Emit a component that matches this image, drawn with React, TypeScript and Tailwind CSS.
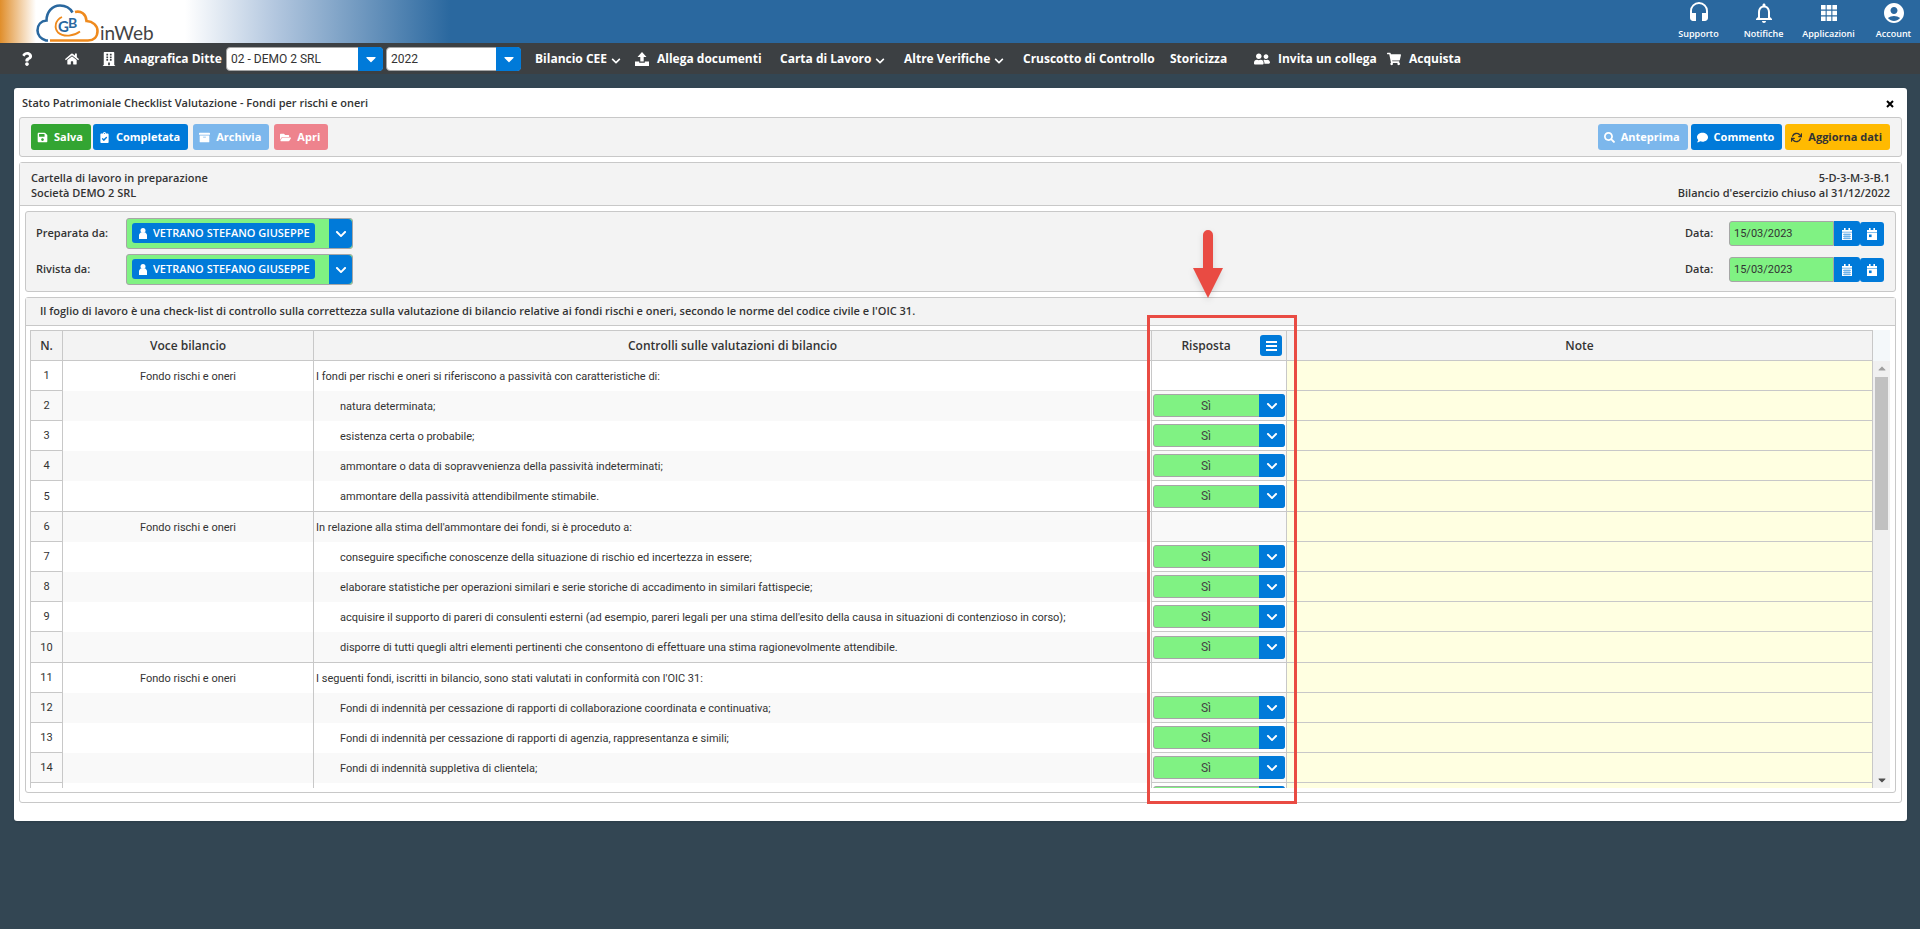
import { useState } from "react";
import type { ReactNode } from "react";
import {
  FaArchive,
  FaBuilding,
  FaCaretDown,
  FaChevronDown,
  FaClipboardCheck,
  FaComment,
  FaFolderOpen,
  FaHome,
  FaQuestion,
  FaSave,
  FaSearch,
  FaShoppingCart,
  FaUserFriends,
} from "react-icons/fa";
import { FiRefreshCw } from "react-icons/fi";
import { MdAccountCircle, MdHeadset, MdNotificationsNone } from "react-icons/md";

type Row = { voce?: string; text: string; answer: boolean };

const VOCE = "Fondo rischi e oneri";

const ROWS: Row[] = [
  { voce: VOCE, text: "I fondi per rischi e oneri si riferiscono a passività con caratteristiche di:", answer: false },
  { text: "natura determinata;", answer: true },
  { text: "esistenza certa o probabile;", answer: true },
  { text: "ammontare o data di sopravvenienza della passività indeterminati;", answer: true },
  { text: "ammontare della passività attendibilmente stimabile.", answer: true },
  { voce: VOCE, text: "In relazione alla stima dell'ammontare dei fondi, si è proceduto a:", answer: false },
  { text: "conseguire specifiche conoscenze della situazione di rischio ed incertezza in essere;", answer: true },
  { text: "elaborare statistiche per operazioni similari e serie storiche di accadimento in similari fattispecie;", answer: true },
  { text: "acquisire il supporto di pareri di consulenti esterni (ad esempio, pareri legali per una stima dell'esito della causa in situazioni di contenzioso in corso);", answer: true },
  { text: "disporre di tutti quegli altri elementi pertinenti che consentono di effettuare una stima ragionevolmente attendibile.", answer: true },
  { voce: VOCE, text: "I seguenti fondi, iscritti in bilancio, sono stati valutati in conformità con l'OIC 31:", answer: false },
  { text: "Fondi di indennità per cessazione di rapporti di collaborazione coordinata e continuativa;", answer: true },
  { text: "Fondi di indennità per cessazione di rapporti di agenzia, rappresentanza e simili;", answer: true },
  { text: "Fondi di indennità suppletiva di clientela;", answer: true },
  { text: "", answer: true },
];

/* ── Icons ─────────────────────────────── */
function UserIcon() {
  return (
    <svg viewBox="0 0 8 11" className="w-2 h-[11px] shrink-0" fill="currentColor">
      <circle cx="4" cy="2.6" r="2.5" />
      <path d="M1.6 4.6h4.8L8 6.4V11H0V6.4z" />
    </svg>
  );
}

function UploadIcon() {
  return (
    <svg viewBox="0 0 14 14" className="w-3.5 h-3.5" fill="currentColor">
      <path d="M7 0l4.500 5H8.700v4.500H5.300V5H2.500z" />
      <path d="M0 9.500h4.200v1.300h5.600V9.500H14V14H0z" />
    </svg>
  );
}

function CalendarIcon() {
  return (
    <svg viewBox="0 0 10 12" className="w-2.5 h-3" fill="none">
      <path d="M0 2h10v10H0z" fill="#fff" />
      <path d="M2 0h1.6v3H2zM6.4 0H8v3H6.4z" fill="#fff" />
      <path d="M0 4.2h10M1 6.4h8M1 8.4h8M1 10.4h8M3 5.4v6M5 5.4v6M7 5.4v6" stroke="#3d99e3" strokeWidth="0.7" />
    </svg>
  );
}

function TodayIcon() {
  return (
    <svg viewBox="0 0 10 12" className="w-2.5 h-3">
      <path d="M0 2h10v2H0zM0 4.500h10V12H0zM2 0h1.6v3H2zM6.4 0H8v3H6.4z" fill="#fff" />
      <path d="M2 6.5h2.6v2.6H2z" fill="#007ad9" />
    </svg>
  );
}

function MenuIcon() {
  return (
    <svg viewBox="0 0 11 10" className="w-[11px] h-2.5" fill="#fff">
      <path d="M0 0h11v2H0zM0 4h11v2H0zM0 8h11v2H0z" />
    </svg>
  );
}

function GridIcon() {
  return (
    <svg viewBox="0 0 16 16" className="w-4 h-4" fill="currentColor">
      <path d="M0 0h4.6v4.6H0zM5.7 0h4.6v4.6H5.7zM11.4 0H16v4.6h-4.6zM0 5.7h4.6v4.6H0zM5.7 5.7h4.6v4.6H5.7zM11.4 5.7H16v4.6h-4.6zM0 11.4h4.6V16H0zM5.7 11.4h4.6V16H5.7zM11.4 11.4H16V16h-4.6z" />
    </svg>
  );
}

function Logo() {
  return (
    <svg viewBox="0 0 64 40" className="w-16 h-10" fill="none">
      <path d="M12 36.5H10C5 35 1.500 31 1.500 26.500C1.500 21 5 17 10.500 16.500C10.500 8 16 1.500 24 1.500C30 1.500 34 4 36.500 8.500" stroke="#2a689f" strokeWidth="2.600" />
      <path d="M39 8C45 6.500 50 10 50.500 17C57 17.500 61.500 21.500 61.500 27C61.500 33 57.500 36.500 52 36.500H14" stroke="#ef8a1d" strokeWidth="2.600" />
      <path d="M26 13C19 16 18 24 22 28.500C28 33.500 38 32 44 27.500" stroke="#ef8a1d" strokeWidth="1.800" />
      <text x="22" y="28" fontFamily="Lato, sans-serif" fontWeight="700" fontSize="15" fill="#2a689f">G</text>
      <text x="32" y="24" fontFamily="Lato, sans-serif" fontWeight="700" fontSize="14" fill="#2a689f">B</text>
    </svg>
  );
}

/* ── Small pieces ──────────────────────── */
function TopLink({ icon, label }: { icon: ReactNode; label: string }) {
  return (
    <a href="#" className="w-[65px] flex flex-col items-center text-white">
      <span className="h-[22px] flex items-center text-2xl">{icon}</span>
      <span className="mt-1 text-[9px] leading-3 font-semibold">{label}</span>
    </a>
  );
}

function NavLink({ icon, label, menu, className = "" }: { icon?: ReactNode; label: string; menu?: boolean; className?: string }) {
  return (
    <a href="#" className={`flex shrink-0 items-center whitespace-nowrap ${className}`}>
      {icon && <span className="mr-2 text-base">{icon}</span>}
      {label}
      {menu && <FaChevronDown className="ml-1 mt-1 text-[10px]" />}
    </a>
  );
}

function NavSelect({ label, value, className }: { label: string; value: string; className: string }) {
  return (
    <div className={`relative flex h-6 shrink-0 ${className}`}>
      <select
        aria-label={label}
        className="w-full appearance-none rounded-sm border border-[#a6a6a6] bg-white pl-1 pr-6 font-['Roboto',sans-serif] text-xs font-normal text-[#333] outline-none"
      >
        <option>{value}</option>
      </select>
      <span className="pointer-events-none absolute inset-y-0 right-0 flex w-[25px] items-center justify-center rounded-r-sm bg-[#007ad9] text-white">
        <FaCaretDown className="text-base" />
      </span>
    </div>
  );
}

function ToolButton({ icon, label, className }: { icon: ReactNode; label: string; className: string }) {
  return (
    <button type="button" className={`flex h-[26px] items-center gap-1.5 rounded-[3px] pl-1.5 pr-2 font-bold ${className}`}>
      {icon}
      {label}
    </button>
  );
}

function PersonField({ id, label }: { id: string; label: string }) {
  return (
    <div className="flex items-center">
      <label htmlFor={id} className="w-[90px] font-semibold">
        {label}
      </label>
      <div className="flex h-[31px] w-[227px] items-stretch justify-between rounded-[3px] border border-[#a6a6a6] bg-[#80f283]">
        <div className="m-1 ml-[5px] flex h-5 w-[183px] items-center gap-1.5 rounded-[3px] bg-[#007ad9] pl-[7px] text-white">
          <UserIcon />
          <select id={id} className="w-full appearance-none bg-transparent font-semibold outline-none">
            <option>VETRANO STEFANO GIUSEPPE</option>
          </select>
        </div>
        <button type="button" aria-label={`Apri elenco ${label}`} className="flex w-[23px] items-center justify-center rounded-r-sm bg-[#007ad9] text-white">
          <FaChevronDown className="text-xs" />
        </button>
      </div>
    </div>
  );
}

function DateField({ id }: { id: string }) {
  const [value, setValue] = useState("15/03/2023");

  return (
    <div className="flex h-[31px] items-center">
      <label htmlFor={id} className="w-11 font-semibold">
        Data:
      </label>
      <input
        id={id}
        type="text"
        value={value}
        onChange={(e) => setValue(e.target.value)}
        className="h-[25px] w-[105px] rounded-l-[3px] border border-[#a6a6a6] bg-[#80f283] px-1 font-['Roboto',sans-serif] text-[#333] outline-none"
      />
      <button type="button" aria-label="Calendario" className="flex h-[25px] w-[26px] items-center justify-center rounded-r-[3px] bg-[#007ad9]">
        <CalendarIcon />
      </button>
      <button type="button" aria-label="Oggi" className="flex h-6 w-6 items-center justify-center rounded-[3px] bg-[#007ad9]">
        <TodayIcon />
      </button>
    </div>
  );
}

function AnswerSelect({ row }: { row: number }) {
  return (
    <div className="relative mx-px h-[23px]">
      <select
        aria-label={`Risposta ${row}`}
        className="block h-full w-full appearance-none rounded-[3px] border border-[#a6a6a6] bg-[#80f283] pr-[26px] text-center [text-align-last:center] text-xs text-[#444] outline-none"
      >
        <option>Sì</option>
        <option>No</option>
      </select>
      <span className="pointer-events-none absolute inset-y-0 right-0 flex w-[26px] items-center justify-center rounded-r-[3px] bg-[#007ad9] text-white">
        <FaChevronDown className="text-xs" />
      </span>
    </div>
  );
}

function Columns() {
  return (
    <colgroup>
      <col className="w-8" />
      <col className="w-[251px]" />
      <col />
      <col className="w-[135px]" />
      <col className="w-[586px]" />
    </colgroup>
  );
}

/* Highlight frame and arrow over the answers column */
function Highlight() {
  return (
    <>
      <div className="pointer-events-none absolute -left-[5px] -top-4 z-10 h-[489px] w-[150px] border-3 border-[#e94b43]" />
      <svg viewBox="0 0 40 76" className="pointer-events-none absolute -top-[103px] left-9 z-10 h-[76px] w-10 drop-shadow-md">
        <path d="M15 7a5 5 0 0 1 10 0v33h10L20 70 5 40h10z" fill="#e94b43" />
      </svg>
    </>
  );
}

function Checklist() {
  return (
    <div className="p-1 pr-[5px]">
      <div className="flex">
        <table className="w-full flex-1 table-fixed border-collapse text-xs">
          <Columns />
          <thead>
            <tr className="h-[30px] bg-[#f3f3f3] [&>th]:border [&>th]:border-[#c8c8c8] [&>th]:p-0 [&>th]:font-semibold">
              <th>N.</th>
              <th>Voce bilancio</th>
              <th>Controlli sulle valutazioni di bilancio</th>
              <th className="relative">
                <div className="flex items-center">
                  <span className="flex-1">Risposta</span>
                  <button type="button" aria-label="Menu risposte" className="mr-1 flex h-[21px] w-[22px] items-center justify-center rounded-[3px] bg-[#007ad9]">
                    <MenuIcon />
                  </button>
                </div>
                <Highlight />
              </th>
              <th>Note</th>
            </tr>
          </thead>
        </table>
        <div className="w-[17px] bg-[#f4f8fa]" />
      </div>

      <div className="flex h-[427px]">
        <div className="flex-1 overflow-y-auto [scrollbar-width:none]">
          <table className="w-full table-fixed border-separate border-spacing-0 border-l border-[#c8c8c8] font-['Roboto',sans-serif]">
            <Columns />
            <tbody>
              {ROWS.map((row, i) => {
                // a group closes on the row before the next heading
                const last = Boolean(ROWS[i + 1]?.voce);
                const line = last ? "border-b" : "";
                return (
                  <tr
                    key={i}
                    className={`[&>td]:border-r [&>td]:border-[#c8c8c8] [&>td]:px-0 [&>td]:pb-0 ${last ? "h-[31px]" : "h-[30px]"} ${i % 2 ? "bg-[#f9f9f9]" : "bg-white"}`}
                  >
                    <td className="border-b pt-0.5 text-center">{row.text && i + 1}</td>
                    <td className={`pt-0.5 text-center ${line}`}>{row.voce}</td>
                    <td className={`pt-0.5 whitespace-nowrap ${line}`}>
                      <div className={row.voce ? "pl-0.5" : "pl-[26px]"}>{row.text}</div>
                    </td>
                    <td className="border-b pt-0">{row.answer && <AnswerSelect row={i + 1} />}</td>
                    <td className="border-b bg-[#ffffe1]" />
                  </tr>
                );
              })}
            </tbody>
          </table>
        </div>
        <div className="flex w-[17px] flex-col items-center bg-[#f0f0f0]">
          <FaCaretDown className="my-0.5 rotate-180 text-xs text-[#a0a0a0]" />
          <div className="h-[153px] w-[13px] bg-[#c1c1c1]" />
          <FaCaretDown className="mb-0.5 mt-auto text-xs text-[#505050]" />
        </div>
      </div>
    </div>
  );
}

export default function App() {
  return (
    <div className="min-h-screen bg-[#334653] font-['Open_Sans','Noto_Sans',sans-serif] text-[11px] text-[#333]">
      {/* ── Brand bar ── */}
      <header className="flex h-[43px] items-start justify-between bg-[linear-gradient(90deg,#e08e2b_0px,#fff_36px,#fff_185px,#b3c7df_275px,#2a689f_450px)] pt-0.5">
        <a href="#" className="flex items-end pl-9 pt-0.5">
          <Logo />
          <span className="pb-px font-['Lato',sans-serif] text-[19px] leading-5 text-[#444]">inWeb</span>
        </a>
        <div className="-mr-1.5 flex">
          <TopLink icon={<MdHeadset />} label="Supporto" />
          <TopLink icon={<MdNotificationsNone />} label="Notifiche" />
          <TopLink icon={<GridIcon />} label="Applicazioni" />
          <TopLink icon={<MdAccountCircle />} label="Account" />
        </div>
      </header>

      {/* ── Main navigation ── */}
      <nav className="flex h-[31px] items-center bg-[#3c4043] pl-5 text-xs font-bold text-white">
        <a href="#" aria-label="Aiuto" className="flex w-[45px] text-sm">
          <FaQuestion />
        </a>
        <a href="#" aria-label="Home" className="flex w-[37px] text-sm">
          <FaHome />
        </a>
        <NavLink icon={<FaBuilding className="text-sm" />} label="Anagrafica Ditte" className="w-[124px]" />
        <NavSelect label="Ditta" value="02 - DEMO 2 SRL" className="w-[157px]" />
        <NavSelect label="Anno" value="2022" className="ml-[3px] w-[135px]" />
        <NavLink label="Bilancio CEE" menu className="ml-3.5 w-[100px]" />
        <NavLink icon={<UploadIcon />} label="Allega documenti" className="w-[145px]" />
        <NavLink label="Carta di Lavoro" menu className="w-[124px]" />
        <NavLink label="Altre Verifiche" menu className="w-[119px]" />
        <NavLink label="Cruscotto di Controllo" className="w-[147px]" />
        <NavLink label="Storicizza" className="w-[84px]" />
        <NavLink icon={<FaUserFriends />} label="Invita un collega" className="w-[133px]" />
        <NavLink icon={<FaShoppingCart className="text-sm" />} label="Acquista" />
      </nav>

      {/* ── Work sheet ── */}
      <main className="mx-3.5 mr-[13px] mt-3.5 rounded-[3px] bg-white px-[5px] pb-[18px] shadow">
        <div className="flex h-[29px] items-center justify-between pl-[3px] pr-2">
          <h1 className="pt-0.5 font-semibold">Stato Patrimoniale Checklist Valutazione - Fondi per rischi e oneri</h1>
          <button type="button" aria-label="Chiudi" className="pt-0.5 text-black">
            <svg viewBox="0 0 8 8" className="h-2 w-2" stroke="currentColor" strokeWidth="2">
              <path d="M1 1l6 6M7 1L1 7" />
            </svg>
          </button>
        </div>

        <div className="flex h-10 items-center justify-between rounded-[3px] border border-[#c8c8c8] bg-[#f3f3f3] px-[11px]">
          <div className="flex">
            <ToolButton icon={<FaSave />} label="Salva" className="bg-[#33a532] text-white" />
            <ToolButton icon={<FaClipboardCheck />} label="Completata" className="ml-0.5 bg-[#007ad9] text-white" />
            <ToolButton icon={<FaArchive />} label="Archivia" className="ml-[5px] bg-[#7cb7ec] text-white" />
            <ToolButton icon={<FaFolderOpen />} label="Apri" className="ml-[5px] bg-[#ee838d] text-white" />
          </div>
          <div className="flex gap-[3px]">
            <ToolButton icon={<FaSearch />} label="Anteprima" className="bg-[#7cb7ec] text-white" />
            <ToolButton icon={<FaComment />} label="Commento" className="bg-[#007ad9] text-white" />
            <ToolButton icon={<FiRefreshCw strokeWidth={3} />} label="Aggiorna dati" className="bg-[#ffba01] text-[#333]" />
          </div>
        </div>

        <section className="mt-[5px] rounded-[3px] border border-[#c8c8c8]">
          <div className="flex h-[43px] items-center justify-between border-b border-[#c8c8c8] bg-[#f3f3f3] px-[11px] pt-0.5 leading-[15px] font-semibold">
            <p>
              Cartella di lavoro in preparazione
              <br />
              Società DEMO 2 SRL
            </p>
            <p className="text-right">
              5-D-3-M-3-B.1
              <br />
              Bilancio d'esercizio chiuso al 31/12/2022
            </p>
          </div>

          <div className="p-[5px] pb-[9px]">
            <div className="flex h-[81px] justify-between rounded-[3px] border border-[#c8c8c8] bg-[#f3f3f3] pl-2.5 pr-[11px] pt-1.5">
              <div className="flex flex-col gap-[5px]">
                <PersonField id="preparata" label="Preparata da:" />
                <PersonField id="rivista" label="Rivista da:" />
              </div>
              <div className="flex flex-col gap-[5px]">
                <DateField id="data-preparata" />
                <DateField id="data-rivista" />
              </div>
            </div>

            <div className="mt-[5px] rounded-[3px] border border-[#c8c8c8]">
              <h2 className="flex h-7 items-center border-b border-[#c8c8c8] bg-[#f3f3f3] pl-3.5 font-semibold">
                Il foglio di lavoro è una check-list di controllo sulla correttezza sulla valutazione di bilancio relative ai fondi rischi e oneri, secondo le norme del codice civile e l'OIC 31.
              </h2>
              <Checklist />
            </div>
          </div>
        </section>
      </main>
    </div>
  );
}
